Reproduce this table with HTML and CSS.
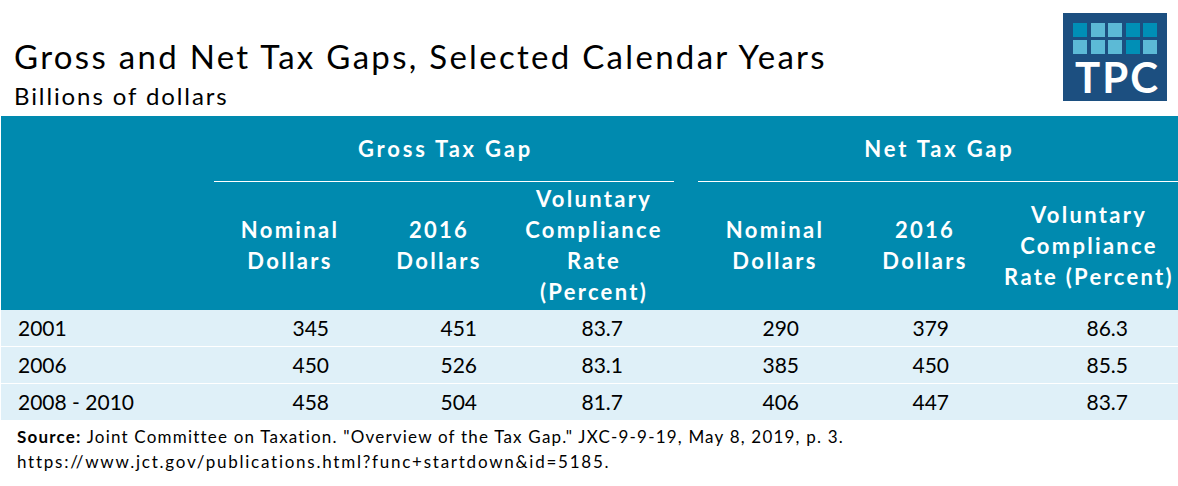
FILE: index.html
```html
<!DOCTYPE html>
<html lang="en">
<head>
<meta charset="utf-8">
<title>Gross and Net Tax Gaps</title>
<link rel="stylesheet" href="styles.css">
</head>
<body>
<div class="page">
  <header class="top">
    <div class="titles">
      <h1 class="title">Gross and Net Tax Gaps, Selected Calendar Years</h1>
      <p class="subtitle">Billions of dollars</p>
    </div>
    <div class="logo">
      <div class="squares">
        <span class="sq dark"></span><span class="sq light"></span><span class="sq light"></span><span class="sq dark"></span><span class="sq dark"></span>
        <span class="sq light"></span><span class="sq light"></span><span class="sq light"></span><span class="sq dark"></span><span class="sq light"></span>
      </div>
      <div class="logo-text">TPC</div>
    </div>
  </header>

  <div class="table">
    <div class="row group-row">
      <div class="cell"></div>
      <div class="cell group gross">Gross Tax Gap</div>
      <div class="cell gap"></div>
      <div class="cell group net">Net Tax Gap</div>
    </div>
    <div class="row sub-row">
      <div class="cell"></div>
      <div class="cell sub">Nominal<br>Dollars</div>
      <div class="cell sub">2016<br>Dollars</div>
      <div class="cell sub">Voluntary<br>Compliance<br>Rate<br>(Percent)</div>
      <div class="cell gap"></div>
      <div class="cell sub">Nominal<br>Dollars</div>
      <div class="cell sub">2016<br>Dollars</div>
      <div class="cell sub">Voluntary<br>Compliance<br>Rate (Percent)</div>
    </div>
    <div class="row data">
      <div class="cell year">2001</div>
      <div class="cell num p35">345</div>
      <div class="cell num p35">451</div>
      <div class="cell num p51">83.7</div>
      <div class="cell gap"></div>
      <div class="cell num p51">290</div>
      <div class="cell num p49">379</div>
      <div class="cell num p50">86.3</div>
    </div>
    <div class="row data">
      <div class="cell year">2006</div>
      <div class="cell num p35">450</div>
      <div class="cell num p35">526</div>
      <div class="cell num p51">83.1</div>
      <div class="cell gap"></div>
      <div class="cell num p51">385</div>
      <div class="cell num p49">450</div>
      <div class="cell num p50">85.5</div>
    </div>
    <div class="row data last">
      <div class="cell year">2008 - 2010</div>
      <div class="cell num p35">458</div>
      <div class="cell num p35">504</div>
      <div class="cell num p51">81.7</div>
      <div class="cell gap"></div>
      <div class="cell num p51">406</div>
      <div class="cell num p49">447</div>
      <div class="cell num p50">83.7</div>
    </div>
  </div>

  <p class="source"><b>Source:</b> Joint Committee on Taxation. "Overview of the Tax Gap." JXC-9-9-19, May 8, 2019, p. 3.<br><span class="url">https://www.jct.gov/publications.html?func+startdown&amp;id=5185.</span></p>
</div>
</body>
</html>
```

FILE: styles.css
```css
* { box-sizing: border-box; }

html, body {
  margin: 0;
  padding: 0;
  background: #ffffff;
}

body {
  font-family: Lato, "Open Sans", "DejaVu Sans", sans-serif;
  color: #000000;
  width: 1178px;
  height: 486px;
  overflow: hidden;
}

.top {
  display: flex;
  justify-content: space-between;
  align-items: flex-start;
  height: 116px;
  padding-left: 14px;
  padding-right: 11px;
}

.titles {
  padding-top: 36px;
}

.title {
  margin: 0;
  font-size: 33px;
  line-height: 40px;
  font-weight: 400;
  letter-spacing: 2.3px;
}

.subtitle {
  margin: 6px 0 0 0;
  font-size: 24px;
  line-height: 28px;
  font-weight: 400;
  letter-spacing: 1.9px;
}

.logo {
  margin-top: 13px;
  width: 104px;
  height: 88px;
  background: #1c4f80;
  padding: 10px 0 0 10px;
}

.squares {
  display: grid;
  grid-template-columns: repeat(5, 14px);
  grid-auto-rows: 14px;
  column-gap: 3.5px;
  row-gap: 3px;
}

.sq.dark { background: #008fb6; }
.sq.light { background: #5cbad6; }

.logo-text {
  width: 84px;
  margin-top: 2px;
  padding-left: 2px;
  text-align: center;
  color: #ffffff;
  font-weight: 700;
  font-size: 42px;
  line-height: 42px;
  letter-spacing: 2px;
}

.table {
  margin-left: 1px;
  width: 1177px;
}

.row {
  display: grid;
  grid-template-columns: 213px 150px 148px 162px 24px 152px 148px 180px;
}

.group-row,
.sub-row {
  background: #008aaf;
  color: #ffffff;
  font-weight: 700;
  font-size: 22px;
}

.group-row {
  height: 66px;
}

.group {
  display: flex;
  align-items: center;
  justify-content: center;
  border-bottom: 1px solid #ffffff;
  letter-spacing: 2.8px;
  padding-left: 3px;
}

.gross { grid-column: 2 / 5; }
.net { grid-column: 6 / 9; }

.sub-row {
  height: 128px;
}

.sub {
  display: flex;
  align-items: center;
  justify-content: center;
  text-align: center;
  line-height: 31px;
  padding-bottom: 2px;
  padding-left: 2px;
  letter-spacing: 2.3px;
}

.data {
  background: #dff0f8;
  height: 37px;
  border-bottom: 1px solid #ffffff;
  font-size: 21px;
  line-height: 36px;
}

.data.last {
  border-bottom: none;
  height: 36px;
}

.year {
  padding-left: 17px;
}

.num { text-align: right; }
.p35 { padding-right: 35px; }
.p49 { padding-right: 49px; }
.p50 { padding-right: 50px; }
.p51 { padding-right: 51px; }

.source {
  margin: 0;
  padding: 4px 0 0 17px;
  font-size: 17px;
  line-height: 25px;
  letter-spacing: 1.2px;
}

.source b {
  font-weight: 700;
}

.source .url {
  letter-spacing: 1.75px;
}
```
